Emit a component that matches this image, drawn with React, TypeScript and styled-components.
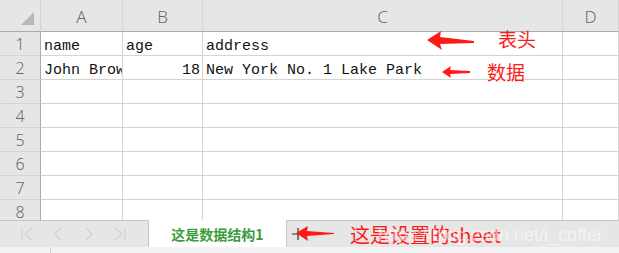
import React from 'react';
import styled, { createGlobalStyle } from 'styled-components';

const GlobalStyle = createGlobalStyle`
  html, body {
    margin: 0;
    padding: 0;
    background: #fff;
    font-family: "Noto Sans", "Noto Sans CJK SC", sans-serif;
  }
`;

const COLS = ['41px', '82px', '80px', '360px', '1fr'];
const rows = [
  ['name', 'age', 'address', ''],
  ['John Brown', '18', 'New York No. 1 Lake Park', ''],
  ['', '', '', ''],
  ['', '', '', ''],
  ['', '', '', ''],
  ['', '', '', ''],
  ['', '', '', ''],
  ['', '', '', ''],
];

export default function App() {
  return (
    <Page>
      <GlobalStyle />
      <Sheet>
        <Grid>
          <Corner>
            <CornerMark />
          </Corner>
          {['A', 'B', 'C', 'D'].map((c) => (
            <ColHead key={c}>{c}</ColHead>
          ))}
          {rows.map((r, i) => (
            <React.Fragment key={i}>
              <RowHead>{i + 1}</RowHead>
              {r.map((v, j) => (
                <Cell key={j} $num={v !== '' && !isNaN(Number(v))}>
                  {v}
                </Cell>
              ))}
            </React.Fragment>
          ))}
        </Grid>
      </Sheet>

      <TabBar>
        <Nav>
          <NavIcon viewBox="0 0 14 16">
            <path d="M2 2v12M12 2L5 8l7 6" />
          </NavIcon>
          <NavIcon viewBox="0 0 14 16">
            <path d="M10 2L4 8l6 6" />
          </NavIcon>
          <NavIcon viewBox="0 0 14 16">
            <path d="M4 2l6 6-6 6" />
          </NavIcon>
          <NavIcon viewBox="0 0 14 16">
            <path d="M2 2l7 6-7 6M12 2v12" />
          </NavIcon>
        </Nav>
        <Tab>这是数据结构1</Tab>
        <Plus>
          <svg width="12" height="14" viewBox="0 0 12 14">
            <path d="M0 7h12M6 1v12" stroke="#333" strokeWidth="1.2" />
          </svg>
        </Plus>
      </TabBar>
      <StatusStrip>
        <StripDivider />
      </StatusStrip>

      <Arrow style={{ left: 427, top: 31 }} width="48" height="19" viewBox="0 0 48 19">
        <path d="M0 9 L14 0 L13 6 L47 10 L47 12 L13 13 L15 19 Z" />
      </Arrow>
      <Label style={{ left: 498, top: 27 }}>表头</Label>

      <Arrow style={{ left: 442, top: 66 }} width="28" height="12" viewBox="0 0 28 12">
        <path d="M0 6 L9 0 L8 4 L28 5 L28 7 L8 8 L9 12 Z" />
      </Arrow>
      <Label style={{ left: 487, top: 60 }}>数据</Label>

      <Arrow style={{ left: 296, top: 226 }} width="38" height="15" viewBox="0 0 38 15">
        <path d="M0 7 L12 0 L11 5 L38 7 L38 8 L11 10 L12 15 Z" />
      </Arrow>
      <SheetLabel>这是设置的sheet</SheetLabel>
      <Watermark>https://blog.csdn.net/i_coffer</Watermark>
    </Page>
  );
}

const Page = styled.div`
  position: relative;
  width: 619px;
  height: 253px;
  overflow: hidden;
  background: #fff;
`;

const Sheet = styled.div`
  height: 220px;
  overflow: hidden;
`;

const Grid = styled.div`
  display: grid;
  grid-template-columns: ${COLS.join(' ')};
  grid-template-rows: 32px repeat(8, 24px);
`;

const Corner = styled.div`
  position: relative;
  background: #e6e6e6;
  border-right: 1px solid #d4d4d4;
  border-bottom: 1px solid #ababab;
`;

const CornerMark = styled.div`
  position: absolute;
  right: 6px;
  bottom: 6px;
  width: 0;
  height: 0;
  border-left: 13px solid transparent;
  border-bottom: 13px solid #b8b8b8;
`;

const ColHead = styled.div`
  background: #e6e6e6;
  border-right: 1px solid #d4d4d4;
  border-bottom: 1px solid #ababab;
  display: flex;
  align-items: center;
  justify-content: center;
  color: #6a6a6a;
  font-size: 17px;
  font-weight: 300;
  padding-top: 2px;
  box-sizing: border-box;
  &:last-of-type {
    border-right: none;
  }
`;

const RowHead = styled.div`
  background: #e6e6e6;
  border-right: 1px solid #ababab;
  border-bottom: 1px solid #d4d4d4;
  display: flex;
  align-items: center;
  justify-content: center;
  color: #6a6a6a;
  font-size: 16px;
  font-weight: 300;
  padding-top: 1px;
  box-sizing: border-box;
`;

const Cell = styled.div<{ $num: boolean }>`
  border-right: 1px solid #d4d4d4;
  border-bottom: 1px solid #d4d4d4;
  font-family: "Liberation Mono", monospace;
  font-size: 15px;
  color: #111;
  white-space: nowrap;
  overflow: hidden;
  line-height: 24px;
  padding: 3px 2px 0 3px;
  box-sizing: border-box;
  text-align: ${(p) => (p.$num ? 'right' : 'left')};
`;

const TabBar = styled.div`
  display: flex;
  align-items: stretch;
  height: 27px;
  background: #e6e6e6;
  border-top: 1px solid #c6c6c6;
  box-sizing: border-box;
`;

const Nav = styled.div`
  width: 148px;
  display: flex;
  align-items: center;
  padding-left: 20px;
  gap: 17px;
  box-sizing: border-box;
`;

const NavIcon = styled.svg`
  width: 14px;
  height: 16px;
  fill: none;
  stroke: #d2d2d2;
  stroke-width: 1.2;
`;

const Tab = styled.div`
  width: 139px;
  margin-top: -1px;
  background: #fff;
  border-left: 1px solid #c6c6c6;
  border-right: 1px solid #c6c6c6;
  display: flex;
  align-items: center;
  justify-content: center;
  font-family: "Noto Sans CJK SC", "Noto Sans", sans-serif;
  font-weight: 700;
  font-size: 14px;
  color: #3b9c3b;
  box-sizing: border-box;
`;

const Plus = styled.div`
  margin-left: 5px;
  display: flex;
  align-items: center;
`;

const StatusStrip = styled.div`
  position: relative;
  height: 6px;
  background: #f3f3f3;
`;

const StripDivider = styled.div`
  margin-left: 50px;
  width: 1px;
  height: 100%;
  background: #cfcfcf;
`;

const Arrow = styled.svg`
  position: absolute;
  fill: #ff1a1a;
`;

const Label = styled.div`
  position: absolute;
  font-family: "Noto Sans CJK SC", sans-serif;
  font-size: 19px;
  line-height: 24px;
  color: #ff1a1a;
`;

const SheetLabel = styled.div`
  position: absolute;
  left: 350px;
  top: 222px;
  font-family: "Noto Sans CJK SC", sans-serif;
  font-size: 20px;
  line-height: 26px;
  color: #ff1a1a;
`;

const Watermark = styled.div`
  position: absolute;
  left: 378px;
  top: 223px;
  font-family: "Liberation Sans", sans-serif;
  font-size: 18px;
  line-height: 24px;
  color: rgba(255, 255, 255, 0.55);
  white-space: nowrap;
`;
